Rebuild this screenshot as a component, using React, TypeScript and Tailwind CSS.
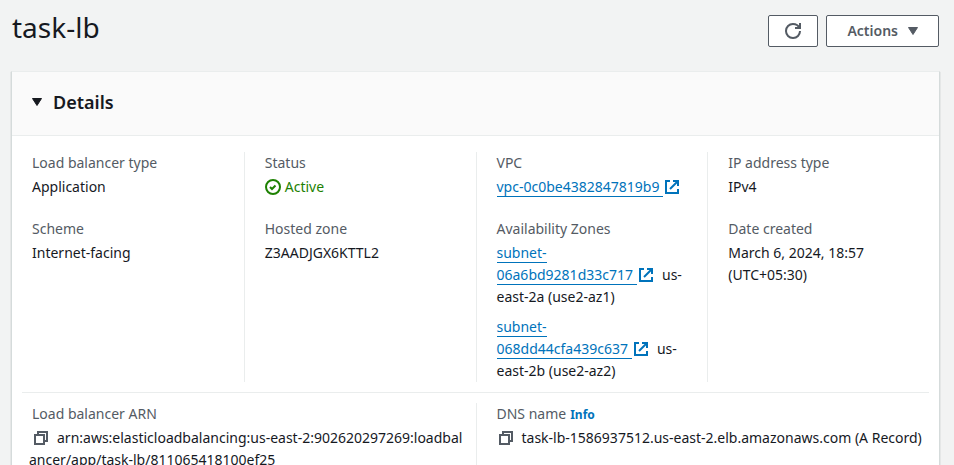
import type { ReactNode } from "react";

function ExternalIcon() {
  return (
    <svg
      viewBox="0 0 16 16"
      className="mb-[3px] ml-px inline-block size-4 align-bottom"
      fill="none"
      stroke="currentColor"
      strokeWidth="2"
      aria-hidden="true"
    >
      <path d="M6 2H2v12h12v-4" />
      <path d="M9 2h5v5" />
      <path d="M6 10l7.500-7.500" />
    </svg>
  );
}

function CopyIcon() {
  return (
    <svg viewBox="0 0 16 16" className="size-4" fill="none" stroke="currentColor" strokeWidth="2" aria-hidden="true">
      <path d="M2 5h9v9H2z" />
      <path d="M5 5V2h9v9h-3" />
    </svg>
  );
}

function RefreshIcon() {
  return (
    <svg viewBox="0 0 16 16" className="size-4" fill="none" stroke="currentColor" strokeWidth="2" aria-hidden="true">
      <path d="M10 5h5V0" />
      <path d="M15 8a6.900 6.900 0 0 1-7 7 6.900 6.900 0 0 1-7-7 6.900 6.900 0 0 1 7-7c2.900 0 5.400 1.600 6.500 4" />
    </svg>
  );
}

function StatusIcon() {
  return (
    <svg viewBox="0 0 16 16" className="size-4" fill="none" stroke="currentColor" strokeWidth="2" aria-hidden="true">
      <circle cx="8" cy="8" r="7" />
      <path d="M5 8l2 2 3.500-3.500" />
    </svg>
  );
}

function Caret() {
  return (
    <svg viewBox="0 0 10 8" className="h-2 w-[10px]" fill="currentColor" stroke="currentColor" strokeLinejoin="round" aria-hidden="true">
      <path d="M.5.5h9L5 7.500z" />
    </svg>
  );
}

function Field({ label, info, children }: { label: string; info?: boolean; children: ReactNode }) {
  return (
    <div>
      <dt className="mb-0.5 text-[#545b64]">
        {label}
        {info && (
          <a href="#info" className="ml-1 text-xs font-bold text-[#0073bb]">
            Info
          </a>
        )}
      </dt>
      <dd>{children}</dd>
    </div>
  );
}

function ExternalLink({ children }: { children: ReactNode }) {
  return (
    <a href="#resource" className="text-[#0073bb]">
      <span className="border-b border-[#0073bb] pr-1">{children}</span>
      <ExternalIcon />
    </a>
  );
}

function Copyable({ label, children }: { label: string; children: ReactNode }) {
  return (
    <div className="-ml-[3px] whitespace-nowrap">
      <button type="button" aria-label={label} className="mb-[3px] ml-1 mr-2 inline-block align-bottom text-[#545b64]">
        <CopyIcon />
      </button>
      {children}
    </div>
  );
}

function Column({ children, first }: { children: ReactNode; first?: boolean }) {
  return (
    <dl className={`flex min-w-0 flex-col gap-5 px-5 ${first ? "" : "border-l border-[#eaeded]"}`}>
      {children}
    </dl>
  );
}

export default function App() {
  return (
    <main className="min-h-screen bg-[#f2f3f3] pl-[11px] pr-[14px] font-['Noto_Sans',sans-serif] text-sm leading-[22px] text-[#16191f]">
      <header className="flex items-start justify-between px-px pb-6 pt-[9px]">
        <h1 className="text-[28px] leading-9">task-lb</h1>
        <div className="flex gap-2 pt-1.5">
          <button
            type="button"
            aria-label="Refresh"
            className="flex h-8 w-[50px] items-center justify-center rounded-xs border border-[#545b64] bg-white text-[#545b64]"
          >
            <RefreshIcon />
          </button>
          <button
            type="button"
            className="flex h-8 items-center gap-2.5 rounded-xs border border-[#545b64] bg-white px-5 font-semibold text-[#545b64]"
          >
            Actions
            <Caret />
          </button>
        </div>
      </header>

      <section className="border border-b-0 border-[#d5dbdb] border-t-[#eaeded] bg-white shadow-[0_1px_1px_0_rgba(0,28,36,0.3)]">
        <h2 className="border-b border-[#eaeded] bg-[#fafafa]">
          <button
            type="button"
            aria-expanded="true"
            className="flex w-full items-center gap-[11px] px-5 pb-[22px] pt-[19px] text-lg leading-[22px] font-semibold"
          >
            <Caret />
            Details
          </button>
        </h2>

        <div className="grid grid-cols-4 pb-[10px] pt-4">
          <Column first>
            <Field label="Load balancer type">Application</Field>
            <Field label="Scheme">Internet-facing</Field>
          </Column>
          <Column>
            <Field label="Status">
              <span className="flex items-center gap-1 text-[#1d8102]">
                <StatusIcon />
                Active
              </span>
            </Field>
            <Field label="Hosted zone">Z3AADJGX6KTTL2</Field>
          </Column>
          <Column>
            <Field label="VPC">
              <ExternalLink>vpc-0c0be4382847819b9</ExternalLink>
            </Field>
            <Field label="Availability Zones">
              <ul className="flex flex-col gap-2">
                <li>
                  <ExternalLink>
                    subnet-
                    <br />
                    06a6bd9281d33c717
                  </ExternalLink>
                  <span className="ml-2">us-</span>
                  <br />
                  east-2a (use2-az1)
                </li>
                <li>
                  <ExternalLink>
                    subnet-
                    <br />
                    068dd44cfa439c637
                  </ExternalLink>
                  <span className="ml-2">us-</span>
                  <br />
                  east-2b (use2-az2)
                </li>
              </ul>
            </Field>
          </Column>
          <Column>
            <Field label="IP address type">IPv4</Field>
            <Field label="Date created">
              March 6, 2024, 18:57
              <br />
              (UTC+05:30)
            </Field>
          </Column>
        </div>

        <hr className="mx-[10px] border-[#eaeded]" />

        <div className="grid grid-cols-2 pb-4 pt-[10px]">
          <Column first>
            <Field label="Load balancer ARN">
              <Copyable label="Copy ARN">
                arn:aws:elasticloadbalancing:us-east-2:902620297269:loadbal
                <br />
                ancer/app/task-lb/811065418100ef25
              </Copyable>
            </Field>
          </Column>
          <Column>
            <Field label="DNS name" info>
              <Copyable label="Copy DNS name">task-lb-1586937512.us-east-2.elb.amazonaws.com (A Record)</Copyable>
            </Field>
          </Column>
        </div>
      </section>
    </main>
  );
}
